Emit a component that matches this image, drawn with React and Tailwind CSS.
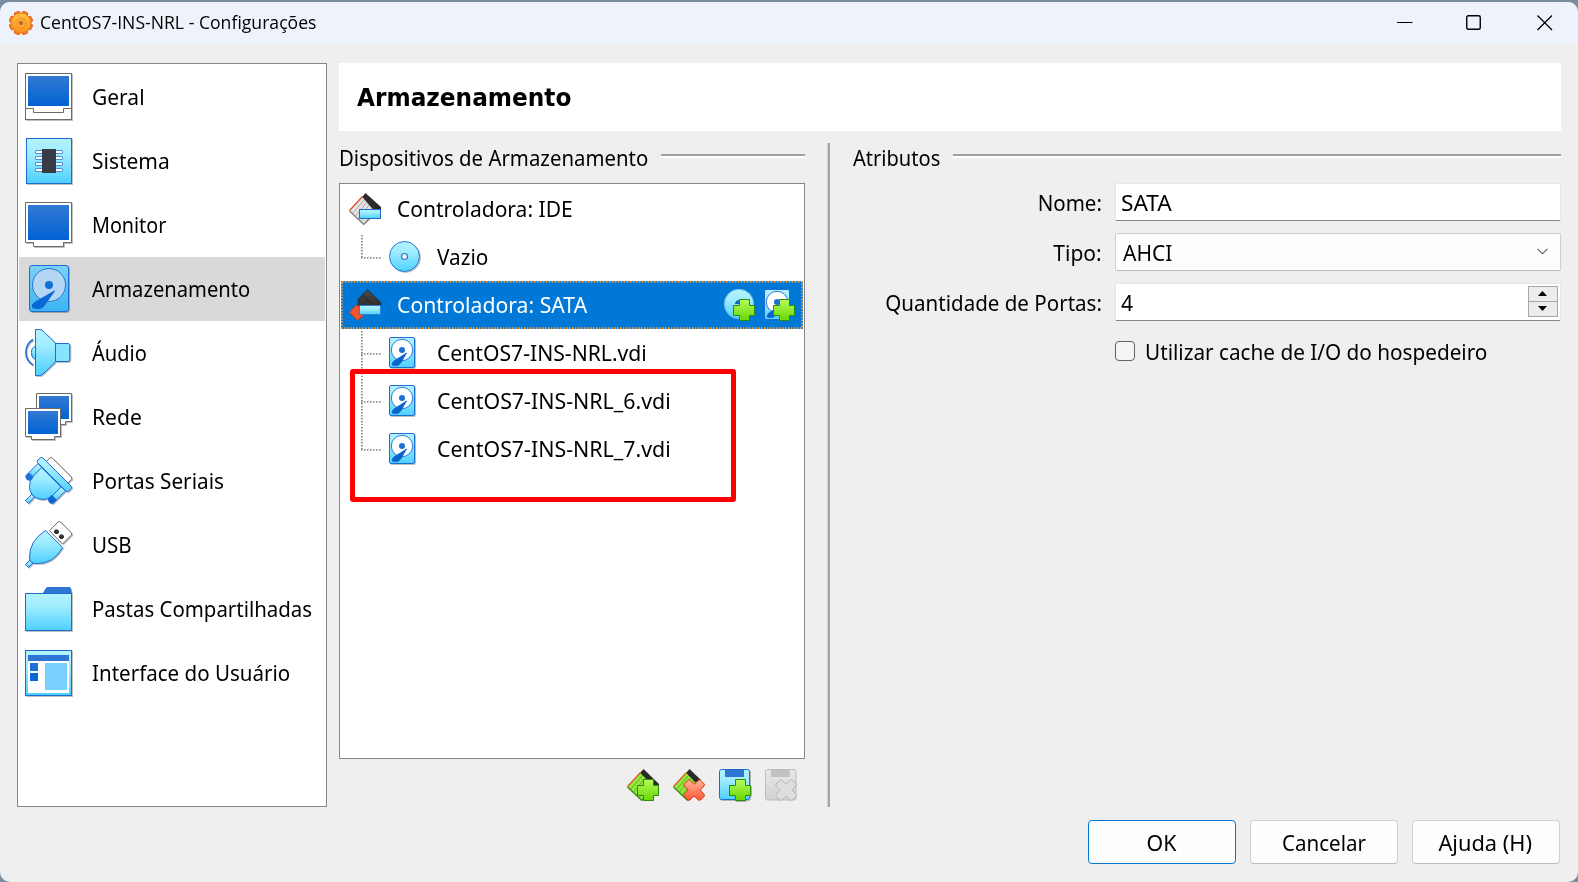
import React from "react";

const cyan = "url(#cyan)";
const blue = "url(#blue)";

function Gradients() {
  return (
    <svg width="0" height="0" className="absolute">
      <defs>
        <linearGradient id="cyan" x1="0" y1="0" x2="0" y2="1">
          <stop offset="0" stopColor="#b4f3ff" />
          <stop offset="0.35" stopColor="#a0ecff" />
          <stop offset="1" stopColor="#4dd0ff" />
        </linearGradient>
        <linearGradient id="cyanDim" x1="0" y1="0" x2="0" y2="1">
          <stop offset="0" stopColor="#7fd0f5" />
          <stop offset="1" stopColor="#3ab4f3" />
        </linearGradient>
        <linearGradient id="blue" x1="0" y1="0" x2="0" y2="1">
          <stop offset="0" stopColor="#3379d3" />
          <stop offset="1" stopColor="#0062d3" />
        </linearGradient>
        <linearGradient id="green" x1="0" y1="0" x2="0" y2="1">
          <stop offset="0" stopColor="#b4fb5c" />
          <stop offset="1" stopColor="#68d603" />
        </linearGradient>
        <linearGradient id="red" x1="0" y1="0" x2="0" y2="1">
          <stop offset="0" stopColor="#ffb69c" />
          <stop offset="1" stopColor="#ff5733" />
        </linearGradient>
        <linearGradient id="gray" x1="0" y1="0" x2="0" y2="1">
          <stop offset="0" stopColor="#e8e8e8" />
          <stop offset="1" stopColor="#d2d2d2" />
        </linearGradient>
        <linearGradient id="dark" x1="0" y1="0" x2="0" y2="1">
          <stop offset="0" stopColor="#4a4a4a" />
          <stop offset="1" stopColor="#2e2e2e" />
        </linearGradient>
        <linearGradient id="orange" x1="0" y1="0" x2="0" y2="24" gradientUnits="userSpaceOnUse">
          <stop offset="0" stopColor="#ffc845" />
          <stop offset="1" stopColor="#fb8a1e" />
        </linearGradient>
      </defs>
    </svg>
  );
}

function Svg({ size, children, shadow = true }) {
  return (
    <svg
      width={size}
      height={size}
      viewBox={`0 0 ${size} ${size}`}
      className={"block shrink-0 overflow-visible " + (shadow ? "drop-shadow-[1px_1px_0px_rgba(0,0,0,0.25)]" : "")}
    >
      {children}
    </svg>
  );
}

const GeneralIcon = () => (
  <Svg size={48}>
    <rect x="0.5" y="0.5" width="46" height="46" fill="#fff" stroke="#6b6b6b" />
    <rect x="3" y="3" width="41" height="30" fill={blue} />
    <path d="M0.5 35.5H8.5V39.5H38.5V35.5H46.5" fill="none" stroke="#6b6b6b" />
  </Svg>
);

const SystemIcon = () => (
  <Svg size={48}>
    <rect x="1.5" y="1.5" width="45" height="45" fill={cyan} stroke="#1c6cd2" />
    {[13, 19, 25, 31].map((y) => (
      <rect key={y} x="10.5" y={y + 0.5} width="27" height="3" rx="0.5" fill="#fff" stroke="#4c8fd8" />
    ))}
    <rect x="17" y="12" width="14" height="24" fill="#383c47" />
  </Svg>
);

const DisplayIcon = () => (
  <Svg size={48}>
    <path d="M0.5 1.5H46.5V41.5H38.5V45.5H8.5V41.5H0.5Z" fill="#fff" stroke="#6b6b6b" />
    <rect x="3" y="4" width="41" height="35" fill={blue} />
  </Svg>
);

const StorageIcon = () => (
  <Svg size={48}>
    <rect x="4.5" y="0.5" width="39" height="46" rx="2.5" fill="url(#cyanDim)" stroke="#1c6cd2" />
    <circle cx="24" cy="20" r="16.5" fill="#b5d5f5" stroke="#2478d6" />
    <circle cx="24" cy="20" r="4" fill="#126fd6" />
    <path d="M29.500 26L9.500 37.500Q6.500 39.500 7.500 42.500Q9 43.500 13 43.500Q17 43.500 18.500 41.500Z" fill="#0a68d6" stroke="#0a68d6" strokeLinejoin="round" />
  </Svg>
);

const AudioIcon = () => (
  <Svg size={48}>
    <path d="M8 10.500A15 15 0 0 0 8 36" fill="none" stroke="#1c6cd2" strokeWidth="1.600" />
    <path d="M10.500 17.500Q6.500 18 6.500 23.500Q6.500 29.500 10.500 30Z" fill={cyan} stroke="#1c6cd2" />
    <path d="M30.500 14.500H43Q44.800 14.500 44.800 16.500V30.500Q44.800 32.500 43 32.500H30.500Z" fill="#86e4ff" stroke="#1c6cd2" />
    <path d="M10.500 0.500H14.500Q16.500 0.500 18 2L30.500 14V33L18 45Q16.500 46.500 14.500 46.500H10.500Z" fill={cyan} stroke="#1c6cd2" />
  </Svg>
);

const NetworkIcon = () => (
  <Svg size={48}>
    <path d="M11.500 0.500H46.500V28.500H40.500V31.500H17V28.500H11.500Z" fill="#fff" stroke="#6b6b6b" />
    <rect x="14" y="3" width="30" height="23" fill={blue} />
    <path d="M0.500 15.500H35.500V43.500H29.500V46.500H6.500V43.500H0.500Z" fill="#fff" stroke="#6b6b6b" />
    <rect x="3" y="18" width="30" height="23" fill={blue} />
  </Svg>
);

const SerialIcon = () => (
  <Svg size={48}>
    <path d="M21 5L24.700 1Q26 0 27.300 1L46.300 20Q47.300 21.300 46.300 22.500L42 27Z" fill="#fff" stroke="#6b6b6b" />
    <path d="M0.500 43.500L7 37L9.500 40L3.500 46.500Z" fill={cyan} stroke="#1c6cd2" />
    <path d="M13 6.500L17.500 11L8.500 20L4 15.500Z" fill={cyan} stroke="#1c6cd2" />
    <path d="M36 29.500L40.500 34L31.500 43L27 38.500Z" fill={cyan} stroke="#1c6cd2" />
    <path d="M16.500 10.500L36 30L27 39Q22 43.500 14 42Q4.500 39 4.500 29.500Q4.500 23 8 19.500Z" fill={cyan} stroke="#1c6cd2" />
    <path d="M3.500 15.500L8.500 20.500L5.500 23.500Q3.500 24 1.500 22.200Q-0.200 20.500 0.500 18.500Z" fill="#1f6fd6" />
    <path d="M26.500 38L31.800 43.200L28.500 46.500Q26.500 47.500 24.500 45.700Q22.500 44 23.200 41.700Z" fill="#0a66d4" />
    <path d="M12.500 5.500Q11.800 4 12.800 3L15.500 0.700Q16.600 0 18 1L46 29Q47.300 30.300 46.300 31.500L43.500 34Q42 35 40.800 34Z" fill={cyan} stroke="#1c6cd2" />
  </Svg>
);

const UsbIcon = () => (
  <Svg size={48}>
    <path d="M24.500 9.700L33 1Q34.300 0 35.600 1L46.300 11.700Q47.300 13 46.300 14.200L37.500 23Z" fill="#fff" stroke="#6b6b6b" />
    <path d="M30 8.500h3v1h1v2.500h-1v1h-3v-1h-1v-2.500h1z" fill="#333" />
    <path d="M35 13.500h3v1h1v2.500h-1v1h-3v-1h-1v-2.500h1z" fill="#333" />
    <path d="M0.500 43.500L5 39L8 42L3.500 46.500Z" fill={cyan} stroke="#1c6cd2" />
    <path d="M20.500 9.500L37.700 26.500Q28 43.500 11 42.500Q5 42.500 4.500 37Q4 20 20.500 9.500Z" fill={cyan} stroke="#1c6cd2" />
  </Svg>
);

const FolderIcon = () => (
  <Svg size={48}>
    <path d="M17.500 8.500L21 3Q21.500 2 22.500 2H44.500Q45.500 2 46 4L47 8.500Z" fill="#2e75d4" />
    <rect x="0.500" y="8.500" width="46" height="37" fill={cyan} stroke="#1c6cd2" />
  </Svg>
);

const InterfaceIcon = () => (
  <Svg size={48}>
    <rect x="0.500" y="1.500" width="46" height="45" fill={cyan} stroke="#1c6cd2" />
    <rect x="3" y="6" width="41" height="6" fill="#2e75d4" />
    <rect x="3" y="12" width="41" height="32" fill="#fff" />
    <rect x="5" y="14" width="8" height="8" fill="#1f6fd6" />
    <rect x="5" y="24" width="8" height="8" fill="#0a68d6" />
    <rect x="20" y="14" width="22" height="27" fill="#78d0ff" />
  </Svg>
);

const DiskShape = () => (
  <>
    <rect x="0.500" y="0.500" width="25" height="30" rx="1.500" fill={cyan} stroke="#1c6cd2" />
    <circle cx="13" cy="13" r="10.700" fill="#fff" stroke="#2a7ad8" />
    <circle cx="13" cy="13" r="3" fill="#1f6fd6" />
    <path d="M17.500 16L5 24Q3 25.500 3.200 28Q6 29 9.500 28Q11 27 12 25.500Z" fill="#0a62cf" stroke="#0a62cf" strokeWidth="0.800" strokeLinejoin="round" />
  </>
);

const DiskIcon = () => (
  <Svg size={32}>
    <DiskShape />
  </Svg>
);

const DiscIcon = () => (
  <Svg size={32}>
    <circle cx="15.500" cy="15.500" r="15" fill={cyan} stroke="#2a78d4" />
    <circle cx="15.500" cy="15.500" r="3" fill="#eaf9ff" stroke="#3b78b8" strokeWidth="1.200" />
  </Svg>
);

const Plus = ({ y = 10 }) => (
  <path
    transform={`translate(0 ${y})`}
    d="M16.500 0.500H26.500V6.500H31.500V16.500H26.500V21.500H16.500V16.500H10.500V6.500H16.500Z"
    fill="url(#green)"
    stroke="#2d8a0a"
  />
);

const Cross = ({ fill = "url(#red)", stroke = "#d8340f" }) => (
  <path
    d="M15.200 11.200Q16 10.500 17 11.300L21 15.300L25.500 11.300Q26.500 10.500 27.500 11.300L31 14.800Q31.800 16 31 17L27.300 21L31.200 25.500Q31.800 26.500 31 27.500L27.500 31Q26.500 31.700 25.500 31L21 27L17 31Q16 31.700 15 31L11.300 27.500Q10.500 26.500 11.200 25.500L15.200 21L11.200 17Q10.400 16 11.200 15Z"
    fill={fill}
    stroke={stroke}
  />
);

const ribs = "M16 6L3.500 20.500M18.500 8.500L6.300 23.300M21 11L9.200 26.200M23.500 13.500L12 29M26.500 16L14.500 31.500";

const IdeIcon = () => (
  <Svg size={32} shadow={false}>
    <path d="M15 1.500L0.500 17.500L14.700 31.500L31 15Z" fill="#e4e4e4" />
    <path d={ribs} stroke="#a2a2a2" strokeWidth="0.900" />
    <path d="M0.500 18L14.700 31.500L21 25.500" fill="none" stroke="#7c7c7c" strokeWidth="1.200" />
    <path d="M13.500 3.500L0.500 17.500" stroke="#e04a20" strokeWidth="1.200" />
    <path d="M16.500 0L32 14V17H24.500L13.300 4Z" fill="#2b2b2b" />
    <rect x="10.500" y="16.500" width="21" height="9" fill={cyan} stroke="#1c6cd2" />
  </Svg>
);

const SataIcon = () => (
  <Svg size={32} shadow={false}>
    <path d="M6.500 16.500L0.500 23.500L8.700 31.500L16 25V16.500Z" fill="#f2552c" stroke="#b83a17" strokeWidth="0.800" />
    <path d="M18.500 0.500L31.800 13.500V17H9.500L9 10.500Z" fill="url(#dark)" stroke="#252525" strokeWidth="0.800" />
    <path d="M13.500 6L24 16" stroke="#222" />
    <rect x="10.500" y="16.500" width="21" height="9" fill={cyan} stroke="#2a82d8" />
  </Svg>
);

const GreenCard = () => (
  <>
    <path d="M15 1.500L0.500 17.500L14.700 31.500L31 15Z" fill="#96e640" />
    <path d={ribs} stroke="#4cae1a" strokeWidth="0.900" />
    <path d="M0.500 18L14.700 31.500L18 28.500" fill="none" stroke="#2f8a10" strokeWidth="1.200" />
    <path d="M13.500 3.500L0.500 17.500" stroke="#e05a20" strokeWidth="1.200" />
    <path d="M16.500 0L32 15V16.500H26L13.300 4Z" fill="#2b2b2b" />
  </>
);

const AddControllerIcon = () => (
  <Svg size={32} shadow={false}>
    <GreenCard />
    <Plus />
  </Svg>
);

const RemoveControllerIcon = () => (
  <Svg size={32} shadow={false}>
    <path d="M15 1.500L0.500 17.500L14.700 31.500L25 15Z" fill="#96e640" />
    <path d="M16 6L3.500 20.500M18.500 8.500L6.300 23.300M21 11L9.200 26.200M18 21L12 29" stroke="#4cae1a" strokeWidth="0.900" />
    <path d="M0.500 18L14.700 31.500" fill="none" stroke="#2f8a10" strokeWidth="1.200" />
    <path d="M13.500 3.500L0.500 17.500" stroke="#e05a20" strokeWidth="1.200" />
    <path d="M16.500 0L28 11L23 14L13.300 4Z" fill="#2b2b2b" />
    <Cross />
  </Svg>
);

const AddAttachmentIcon = () => (
  <Svg size={32}>
    <rect x="0.500" y="0.500" width="30" height="30" rx="2" fill={cyan} stroke="#1c6cd2" />
    <rect x="6" y="1" width="19" height="7" fill="#2e75d4" />
    <Plus />
  </Svg>
);

const RemoveAttachmentIcon = () => (
  <Svg size={32} shadow={false}>
    <rect x="0.500" y="0.500" width="30.500" height="30.500" rx="2" fill="url(#gray)" stroke="#bdbdbd" />
    <rect x="6" y="1" width="19" height="7" fill="#c2c2c2" />
    <Cross fill="#dedede" stroke="#b4b4b4" />
  </Svg>
);

const AddDiscIcon = () => (
  <Svg size={32} shadow={false}>
    <circle cx="15" cy="15" r="14.700" fill={cyan} stroke="#6fb8ee" />
    <path d="M11 15A4 4 0 0 1 17 11.500V15Z" fill="#1266b8" />
    <g transform="translate(-1 0)"><Plus y={10} /></g>
  </Svg>
);

const AddDiskIcon = () => (
  <Svg size={32} shadow={false}>
    <DiskShape />
    <g transform="translate(-1 0)"><Plus y={10} /></g>
  </Svg>
);

const AppIcon = () => (
  <Svg size={24} shadow={false}>
    {[22.5, 67.5, 112.5, 157.5].map((a) => (
      <rect key={a} x="9" y="0.300" width="6" height="23.400" rx="2" fill="#f58a24" stroke="#e2601a" strokeWidth="1" transform={`rotate(${a} 12 12)`} />
    ))}
    <circle cx="12" cy="12" r="10" fill="url(#orange)" stroke="#e87420" strokeWidth="0.800" />
    <circle cx="12" cy="12" r="5" fill="#ffa52e" stroke="#f08a24" strokeWidth="0.800" />
    <circle cx="12" cy="12" r="2" fill="#a8683a" />
  </Svg>
);

const sections = [
  { label: "Geral", Icon: GeneralIcon, fit: "scale-x-[0.954]" },
  { label: "Sistema", Icon: SystemIcon, fit: "scale-x-[0.953]" },
  { label: "Monitor", Icon: DisplayIcon, fit: "scale-x-[0.897]" },
  { label: "Armazenamento", Icon: StorageIcon, fit: "scale-x-[0.917]", selected: true },
  { label: "Áudio", Icon: AudioIcon, fit: "scale-x-[0.91]" },
  { label: "Rede", Icon: NetworkIcon, fit: "scale-x-[0.957]" },
  { label: "Portas Seriais", Icon: SerialIcon, fit: "scale-x-[0.942]" },
  { label: "USB", Icon: UsbIcon, fit: "scale-x-[0.934]" },
  { label: "Pastas Compartilhadas", Icon: FolderIcon, fit: "scale-x-[0.928]" },
  { label: "Interface do Usuário", Icon: InterfaceIcon, fit: "scale-x-[0.934]" },
];

function Label({ children, fit, origin = "origin-left" }) {
  return <span className={`inline-block whitespace-nowrap ${origin} ${fit}`}>{children}</span>;
}

function Sidebar() {
  return (
    <nav className="h-[744px] w-[310px] shrink-0 border border-[#828790] bg-white p-px">
      {sections.map(({ label, Icon, fit, selected }) => (
        <div key={label} className={`flex h-16 items-center pl-[6px] ${selected ? "bg-[#d9d9d9]" : ""}`}>
          <Icon />
          <div className="pb-0.5 pl-[18.6px]">
            <Label fit={fit}>{label}</Label>
          </div>
        </div>
      ))}
    </nav>
  );
}

function SectionTitle({ children, fit, width }) {
  return (
    <div className="flex h-[30px] items-center">
      <div className={`shrink-0 pb-0.5 ${width}`}>
        <Label fit={fit}>{children}</Label>
      </div>
      <div className="mb-1 h-1 flex-1 border-b-2 border-t-2 border-b-white border-t-[#a0a0a0]" />
    </div>
  );
}

function Branch({ last }) {
  return (
    <svg width="48" height="48" className="block shrink-0" stroke="#8c8c8c" strokeWidth="1.800" strokeDasharray="1.500 1.500">
      <path d={last ? "M20.900 2V25" : "M20.900 2V48"} />
      <path d="M20 24.900H41" />
    </svg>
  );
}

function RowLabel({ children, fit }) {
  return (
    <div className="pb-0.5 pl-[15.700px]">
      <Label fit={fit}>{children}</Label>
    </div>
  );
}

function ChildRow({ label, fit, Icon, last }) {
  return (
    <div className="flex h-12 items-center">
      <Branch last={last} />
      <Icon />
      <RowLabel fit={fit}>{label}</RowLabel>
    </div>
  );
}

function StorageTree() {
  return (
    <div className="relative h-[576px] w-[466px] border border-[#828790] bg-white p-px">
      <div className="flex h-12 items-center pl-2">
        <IdeIcon />
        <RowLabel fit="scale-x-[0.955]">Controladora: IDE</RowLabel>
      </div>
      <ChildRow label="Vazio" fit="scale-x-[0.943]" Icon={DiscIcon} last />
      <div className="relative flex h-12 items-center bg-[#0078d7] pl-2 text-white">
        <svg width="462" height="48" className="absolute left-0 top-0" fill="none" stroke="#ff9a36" strokeWidth="1.800" strokeDasharray="1.500 1.500">
          <rect x="0.900" y="0.900" width="460.200" height="46.200" />
        </svg>
        <SataIcon />
        <RowLabel fit="scale-x-[0.963]">Controladora: SATA</RowLabel>
        <div className="ml-auto flex gap-2 pr-[7px]">
          <AddDiscIcon />
          <AddDiskIcon />
        </div>
      </div>
      <ChildRow label="CentOS7-INS-NRL.vdi" fit="scale-x-[0.961]" Icon={DiskIcon} />
      <ChildRow label="CentOS7-INS-NRL_6.vdi" fit="scale-x-[0.971]" Icon={DiskIcon} />
      <ChildRow label="CentOS7-INS-NRL_7.vdi" fit="scale-x-[0.971]" Icon={DiskIcon} last />
      <div className="absolute left-[10px] top-[185px] h-[133px] w-[386px] rounded-[3px] border-5 border-[#ff0000]" />
    </div>
  );
}

function Attributes() {
  return (
    <section className="w-[708px] shrink-0">
      <SectionTitle fit="scale-x-[0.912]" width="w-[100px]">Atributos</SectionTitle>
      <div className="mt-[10px] grid grid-cols-[249px_446px] gap-x-[13px] gap-y-3">
        <div className="flex h-[38px] items-center justify-end">
          <Label fit="scale-x-[0.932]" origin="origin-right">Nome:</Label>
        </div>
        <div className="flex h-[38px] items-center rounded-[2px] border border-[#e6e6e6] border-b-[#868686] bg-white pl-[4.500px]">
          <Label fit="scale-x-[1.03]">SATA</Label>
        </div>
        <div className="flex h-[38px] items-center justify-end">
          <Label fit="scale-x-[0.955]" origin="origin-right">Tipo:</Label>
        </div>
        <div className="flex h-[38px] items-center justify-between rounded-[2px] border border-[#d0d0d0] border-b-[#bcbcbc] bg-[#fdfdfd] pl-[7px] pr-3">
          <Label fit="scale-x-[0.955]">AHCI</Label>
          <svg width="11" height="7" viewBox="0 0 11 7" fill="none" stroke="#5c5c5c" strokeWidth="1.100" className="mb-px">
            <path d="M0.500 0.800L5.500 5.800L10.500 0.800" />
          </svg>
        </div>
        <div className="flex h-[38px] items-center justify-end">
          <Label fit="scale-x-[0.934]" origin="origin-right">Quantidade de Portas:</Label>
        </div>
        <div className="flex h-[38px] items-center justify-between rounded-[2px] border border-[#e6e6e6] border-b-[#868686] bg-white pl-[5px] pr-[2px]">
          <Label fit="scale-x-[0.96]">4</Label>
          <div className="mb-px flex h-[31px] w-[30px] flex-col border border-[#a8a8a8] bg-[#ececec]">
            <div className="flex flex-1 items-center justify-center border-b border-[#a8a8a8] pb-0.5 pr-px">
              <svg width="9" height="5" viewBox="0 0 9 5"><path d="M4.500 0L9 5H0Z" /></svg>
            </div>
            <div className="flex flex-1 items-center justify-center pb-0.5 pr-px">
              <svg width="9" height="5" viewBox="0 0 9 5"><path d="M4.500 5L9 0H0Z" /></svg>
            </div>
          </div>
        </div>
        <div />
        <div className="flex h-[35px] items-center gap-[10px]">
          <div className="h-5 w-5 shrink-0 rounded-[4px] border border-[#626262] bg-[#f4f4f4]" />
          <Label fit="scale-x-[0.942]">Utilizar cache de I/O do hospedeiro</Label>
        </div>
      </div>
    </section>
  );
}

function TitleBar() {
  return (
    <header className="flex h-[43px] items-center bg-[#eef3fb] pl-[9px] font-['Open_Sans',sans-serif] text-[18px]">
      <div className="pb-px">
        <AppIcon />
      </div>
      <div className="pb-[3px] pl-[6.800px]">
        <Label fit="scale-x-[0.979]">CentOS7-INS-NRL - Configurações</Label>
      </div>
      <div className="ml-auto flex items-center pb-px pr-[25px]">
        <svg width="16" height="16"><path d="M0 7.500H15.500" stroke="#000" /></svg>
        <svg width="16" height="16" className="ml-[53px] mr-[55px]"><rect x="0.750" y="0.750" width="13.500" height="13.500" rx="1.500" fill="none" stroke="#000" strokeWidth="1.400" /></svg>
        <svg width="16" height="16"><path d="M0.500 0.500L15 15M15 0.500L0.500 15" stroke="#000" strokeWidth="1.300" /></svg>
      </div>
    </header>
  );
}

function DialogButton({ children, fit, primary }) {
  return (
    <button className={`flex h-11 w-[148px] items-center justify-center rounded-[4px] border bg-[#fdfdfd] pr-px ${primary ? "border-[#0078d4]" : "border-[#d0d0d0] border-b-[#bcbcbc]"}`}>
      <Label fit={fit} origin="origin-center">{children}</Label>
    </button>
  );
}

export default function App() {
  return (
    <div className="h-[882px] w-[1578px] overflow-hidden bg-[#7a8d9e] pt-0.5 font-['Noto_Sans',sans-serif] text-[22px] leading-[30px] text-black">
      <Gradients />
      <div className="flex h-[880px] flex-col overflow-hidden rounded-[10px] bg-[#efefef]">
        <TitleBar />
        <main className="flex gap-3 pl-[17px] pt-[18px]">
          <Sidebar />
          <div className="flex w-[1222px] flex-col">
            <h1 className="flex h-[68px] items-center bg-white pl-[18px] pt-[2px] font-['DejaVu_Sans',sans-serif] text-[24px] font-bold">
              <Label fit="scale-x-[0.968]">Armazenamento</Label>
            </h1>
            <div className="flex pt-3">
              <section className="w-[466px] shrink-0">
                <SectionTitle fit="scale-x-[0.926]" width="w-[322px]">Dispositivos de Armazenamento</SectionTitle>
                <div className="mt-[10px]">
                  <StorageTree />
                </div>
                <div className="flex gap-[14px] pl-[288px] pt-[10px]">
                  <AddControllerIcon />
                  <RemoveControllerIcon />
                  <AddAttachmentIcon />
                  <RemoveAttachmentIcon />
                </div>
              </section>
              <div className="ml-[22px] mr-[23px] h-[664px] w-[3px] shrink-0 border-l border-l-[#d0d0d0] bg-[#a6a6a6]" />
              <Attributes />
            </div>
          </div>
        </main>
        <footer className="mt-[13px] flex gap-[14px] pl-[1088px]">
          <DialogButton fit="scale-x-[0.97]" primary>OK</DialogButton>
          <DialogButton fit="scale-x-[0.935]">Cancelar</DialogButton>
          <DialogButton fit="scale-x-[0.991]">Ajuda (H)</DialogButton>
        </footer>
      </div>
    </div>
  );
}
